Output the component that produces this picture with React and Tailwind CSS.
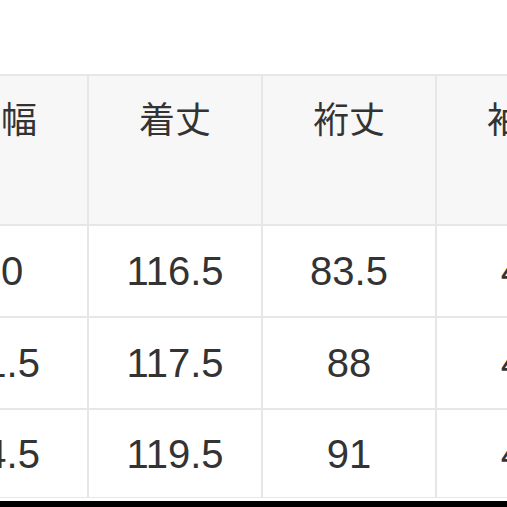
import React from "react";

const headers = ["身幅", "着丈", "裄丈", "袖丈"];
const rows = [
  ["60", "116.5", "83.5", "47"],
  ["61.5", "117.5", "88", "48"],
  ["64.5", "119.5", "91", "49"],
];

export default function App() {
  return (
    <div className="w-[507px] h-[507px] overflow-hidden bg-white flex flex-col">
      <div className="h-[74px] shrink-0" />
      <div className="ml-[-85px] w-[700px] grid grid-cols-[172px_172px_172px_172px] gap-[2px] bg-[#e7e7e7] py-[2px] pb-[1px]">
        {headers.map((h) => (
          <div
            key={h}
            className="h-[148px] bg-[#f7f7f7] flex justify-center pt-[23px] text-[36px] leading-[36px] text-[#333]"
            style={{ fontFamily: '"Noto Sans CJK JP", "Noto Sans", sans-serif' }}
          >
            {h}
          </div>
        ))}
        {rows.map((r, i) =>
          r.map((v, j) => (
            <div
              key={i + "-" + j}
              className={
                "bg-white flex items-center justify-center text-[40px] text-[#333] font-['Liberation_Sans',Arial,sans-serif] " +
                (i === 2 ? "h-[87px]" : "h-[90px]")
              }
            >
              {v}
            </div>
          ))
        )}
      </div>
      <div className="flex-1 bg-white" />
      <div className="h-[6px] bg-black shrink-0" />
    </div>
  );
}
